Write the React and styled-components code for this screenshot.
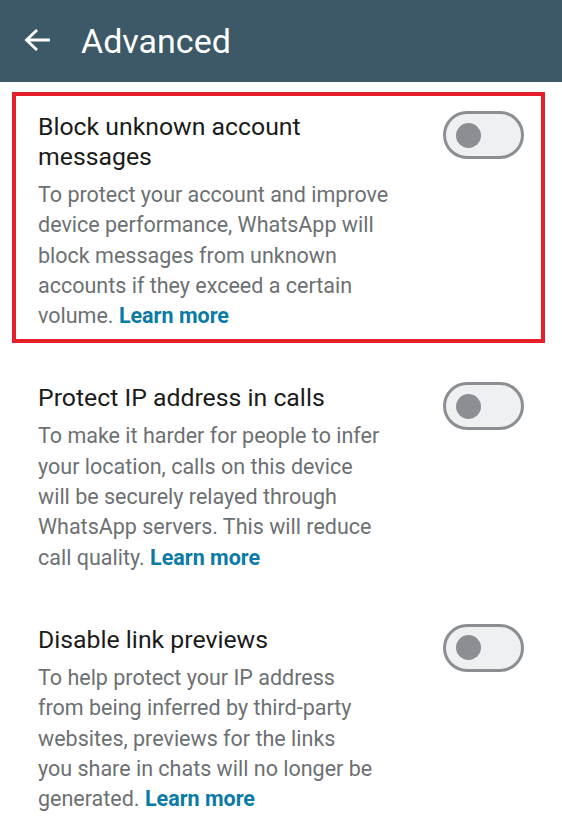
import styled, { createGlobalStyle } from "styled-components";

const GlobalStyle = createGlobalStyle`
  html, body {
    margin: 0;
    padding: 0;
    background: #ffffff;
  }
  body {
    font-family: Roboto, "Noto Sans", "Liberation Sans", sans-serif;
    -webkit-font-smoothing: antialiased;
  }
`;

// lines kept as the device wrapped them
const settings = [
  {
    id: "block",
    title: "Block unknown account messages",
    lines: [
      "To protect your account and improve",
      "device performance, WhatsApp will",
      "block messages from unknown",
      "accounts if they exceed a certain",
      "volume.",
    ],
    highlighted: true,
  },
  {
    id: "ip",
    title: "Protect IP address in calls",
    lines: [
      "To make it harder for people to infer",
      "your location, calls on this device",
      "will be securely relayed through",
      "WhatsApp servers. This will reduce",
      "call quality.",
    ],
  },
  {
    id: "previews",
    title: "Disable link previews",
    lines: [
      "To help protect your IP address",
      "from being inferred by third-party",
      "websites, previews for the links",
      "you share in chats will no longer be",
      "generated.",
    ],
  },
];

function BackArrow() {
  return (
    <svg width="26" height="22" viewBox="0 0 26 22" fill="none">
      <path
        d="M24.5 11H3M12 2L2.5 11L12 20"
        stroke="#ffffff"
        strokeWidth="2.8"
        strokeLinecap="square"
      />
    </svg>
  );
}

function Switch() {
  return (
    <Track>
      <Knob />
    </Track>
  );
}

function SettingRow({ title, lines }) {
  const last = lines.length - 1;
  return (
    <>
      <TextCol>
        <Title>{title}</Title>
        <Description>
          {lines.map((line, i) => (
            <Line key={i}>
              {line}
              {i === last && (
                <>
                  {" "}
                  <LearnMore href="#">Learn more</LearnMore>
                </>
              )}
            </Line>
          ))}
        </Description>
      </TextCol>
      <Switch />
    </>
  );
}

export default function App() {
  return (
    <Screen>
      <GlobalStyle />
      <Toolbar>
        <BackButton aria-label="Back">
          <BackArrow />
        </BackButton>
        <Heading>Advanced</Heading>
      </Toolbar>
      <List>
        {settings.map((s) =>
          s.highlighted ? (
            <Highlight key={s.id}>
              <SettingRow title={s.title} lines={s.lines} />
            </Highlight>
          ) : (
            <Row key={s.id}>
              <SettingRow title={s.title} lines={s.lines} />
            </Row>
          )
        )}
      </List>
    </Screen>
  );
}

const Screen = styled.div`
  width: 562px;
  min-height: 833px;
  background: #ffffff;
  overflow: hidden;
`;

const Toolbar = styled.header`
  height: 82px;
  background: #3d5866;
  display: flex;
  align-items: center;
  padding-left: 24px;
  gap: 31px;
`;

const BackButton = styled.button`
  border: 0;
  background: none;
  padding: 0;
  margin-top: -2px;
  display: flex;
  cursor: pointer;
`;

const Heading = styled.h1`
  margin: 0;
  color: #ffffff;
  font-size: 34px;
  font-weight: 400;
  line-height: 1;
  margin-top: -1px;
`;

const Row = styled.section`
  display: flex;
  align-items: flex-start;
  justify-content: space-between;
  gap: 20px;
  padding: 52px 38px 0 38px;
`;

const Highlight = styled(Row)`
  margin: 10px 17px 0 12px;
  border: 4px solid #e5202b;
  padding: 16px 17px 8px 22px;
`;

const List = styled.main`
  display: flex;
  flex-direction: column;

  ${Highlight} + ${Row} {
    padding-top: 40px;
  }
`;

const TextCol = styled.div`
  flex: 1;
  max-width: 364px;
`;

const Title = styled.div`
  color: #1b1b1b;
  font-size: 24.8px;
  line-height: 30px;
  font-weight: 400;
  margin-bottom: 8px;
`;

const Description = styled.p`
  margin: 0;
  color: #6c7073;
  font-size: 21.5px;
  line-height: 30.3px;
`;

const Line = styled.span`
  display: block;
  white-space: nowrap;
`;

const LearnMore = styled.a`
  color: #0a7ba6;
  font-weight: 700;
  text-decoration: none;
`;

const Track = styled.div`
  flex: none;
  box-sizing: border-box;
  width: 81px;
  height: 48px;
  margin-top: -1px;
  border: 3px solid #8b8f93;
  border-radius: 24px;
  background: #eff0f2;
  display: flex;
  align-items: center;
  padding-left: 10px;
`;

const Knob = styled.span`
  width: 25px;
  height: 25px;
  border-radius: 50%;
  background: #8b8f93;
`;
